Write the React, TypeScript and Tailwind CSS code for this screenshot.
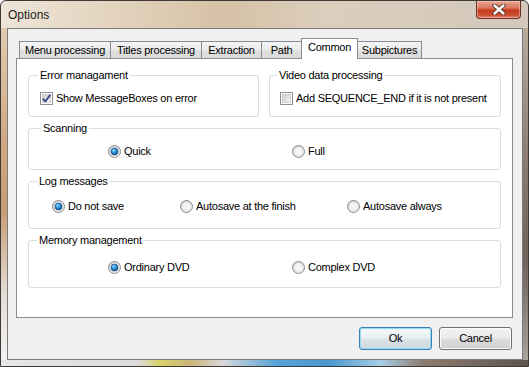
import React from "react";

function Radio({ checked }: { checked?: boolean }) {
  return (
    <svg width="13" height="13" viewBox="0 0 13 13" className="shrink-0">
      <defs>
        <linearGradient id="rOut" x1="0" y1="0" x2="1" y2="1">
          <stop offset="0" stopColor="#cfcfcf" />
          <stop offset="1" stopColor="#fdfdfd" />
        </linearGradient>
        <radialGradient id="rDot" cx="0.4" cy="0.35" r="0.75">
          <stop offset="0" stopColor="#8fe0ff" />
          <stop offset="0.45" stopColor="#2a8fd6" />
          <stop offset="1" stopColor="#0d3f78" />
        </radialGradient>
      </defs>
      <circle cx="6.5" cy="6.5" r="6" fill="url(#rOut)" stroke="#8b8b8b" strokeWidth="1" />
      <circle cx="6.5" cy="6.5" r="4.6" fill="#f4f4f4" stroke="#d0d0d0" strokeWidth="0.6" />
      {checked && <circle cx="6.5" cy="6.5" r="3.5" fill="url(#rDot)" stroke="#1d4f86" strokeWidth="0.7" />}
    </svg>
  );
}

function Check({ checked }: { checked?: boolean }) {
  return (
    <svg width="13" height="13" viewBox="0 0 13 13" className="shrink-0">
      <defs>
        <linearGradient id="cIn" x1="0" y1="0" x2="1" y2="1">
          <stop offset="0" stopColor="#cbcbcb" />
          <stop offset="1" stopColor="#f7f7f7" />
        </linearGradient>
      </defs>
      <rect x="0.5" y="0.5" width="12" height="12" fill="#fdfdfd" stroke="#8e8f8f" />
      <rect x="2.5" y="2.5" width="8" height="8" fill="url(#cIn)" stroke="#b8b8b8" strokeWidth="0.6" />
      {checked && (
        <path d="M2.8 6.6 L5.3 9.3 L10.3 2.8" fill="none" stroke="#3b4f8e" strokeWidth="1.9" strokeLinejoin="round" />
      )}
    </svg>
  );
}

function Group({
  title,
  legendClass,
  className,
  children,
}: {
  title: string;
  legendClass: string;
  className: string;
  children: React.ReactNode;
}) {
  return (
    <div className={`rounded-[3px] border border-[#d5dfe5] ${className}`}>
      <span className={`-mt-[7px] block w-fit bg-white px-[2px] leading-[13px] ${legendClass}`}>{title}</span>
      {children}
    </div>
  );
}

function Item({ checked, label, radio, className }: { checked?: boolean; label: string; radio?: boolean; className?: string }) {
  return (
    <div className={`flex items-center gap-[3px] ${className ?? ""}`}>
      {radio ? <Radio checked={checked} /> : <Check checked={checked} />}
      <span className="leading-[13px] whitespace-nowrap">{label}</span>
    </div>
  );
}

function Tab({ label, w, first }: { label: string; w: string; first?: boolean }) {
  return (
    <div
      className={`flex h-[17px] items-center justify-center border border-b-0 border-[#898c95] bg-[linear-gradient(180deg,#f4f4f4,#ececec_45%,#e0e0e0_55%,#d9d9d9)] leading-[13px] whitespace-nowrap ${w} ${first ? "" : "-ml-px"}`}
    >
      {label}
    </div>
  );
}

export default function App() {
  return (
    <div className="h-[367px] w-[529px] font-['Liberation_Sans',Arial,sans-serif] text-[11px] tracking-[-0.25px] text-black">
      <div className="flex h-[367px] w-[529px] flex-col overflow-hidden rounded-t-[6px] border border-[#3f3a36] bg-[linear-gradient(90deg,#eee4d8_0%,#e3d3bd_22%,#d5c1a5_42%,#dccebd_62%,#d3c8bb_100%)]">
        {/* Title bar */}
        <div className="flex h-[27px] shrink-0 items-start">
          <span className="pl-[7px] pt-[7px] text-[12px] leading-[14px] tracking-normal text-[#1e1e1e]">Options</span>
          <div className="mr-[7px] ml-auto flex h-[18px] w-[45px] items-center justify-center rounded-b-[4px] border border-t-0 border-[#6a2e22] bg-[linear-gradient(180deg,#e9a795,#dc7860_40%,#c5391c_55%,#cf5235_85%,#e28a6e)] shadow-[inset_0_0_0_1px_rgba(255,220,210,0.45)]">
            <svg width="14" height="11" viewBox="0 0 14 11">
              <path d="M2.5 1.5 L11.5 9.5 M11.5 1.5 L2.5 9.5" stroke="#4a2a28" strokeWidth="4.2" strokeLinecap="round" />
              <path d="M2.5 1.5 L11.5 9.5 M11.5 1.5 L2.5 9.5" stroke="#ffffff" strokeWidth="2.4" strokeLinecap="round" />
            </svg>
          </div>
        </div>

        {/* Middle */}
        <div className="flex h-[332px] shrink-0">
          <div className="w-[6px] bg-[linear-gradient(180deg,#e2cbb0,#cfa882_35%,#c89c74_55%,#e4ddd6_80%,#f2f2f2)]" />
          <div className="flex w-[516px] flex-col border border-[#7a7a7a] bg-[#f0f0f0]">
            {/* Tabs */}
            <div className="mt-[9px] ml-[11px] flex h-[20px] items-end">
              <Tab label="Menu processing" w="w-[92px]" first />
              <Tab label="Titles processing" w="w-[92px]" />
              <Tab label="Extraction" w="w-[61px]" />
              <Tab label="Path" w="w-[41px]" />
              <div className="relative z-10 -mb-px -ml-px flex h-[21px] w-[57px] justify-center border border-b-0 border-[#898c95] bg-white pt-[2px] leading-[13px]">
                Common
              </div>
              <Tab label="Subpictures" w="w-[65px]" />
            </div>

            {/* Panel */}
            <div className="ml-[8px] flex h-[260px] w-[497px] flex-col border border-[#898c95] bg-white px-[11px] pt-[16px]">
              <div className="flex gap-[10px]">
                <Group title="Error managament" legendClass="ml-[9px]" className="h-[42px] w-[231px]">
                  <Item className="mt-[10px] ml-[11px]" checked label="Show MessageBoxes on error" />
                </Group>
                <Group title="Video data processing" legendClass="ml-[7px]" className="h-[42px] flex-1">
                  <Item className="mt-[10px] ml-[10px]" label="Add SEQUENCE_END if it is not present" />
                </Group>
              </div>

              <Group title="Scanning" legendClass="ml-[12px]" className="mt-[11px] h-[42px]">
                <div className="mt-[10px] flex pl-[79px]">
                  <Item radio checked label="Quick" className="w-[184px]" />
                  <Item radio label="Full" />
                </div>
              </Group>

              <Group title="Log messages" legendClass="ml-[8px]" className="mt-[11px] h-[48px]">
                <div className="mt-[12px] flex pl-[23px]">
                  <Item radio checked label="Do not save" className="w-[128px]" />
                  <Item radio label="Autosave at the finish" className="w-[167px]" />
                  <Item radio label="Autosave always" />
                </div>
              </Group>

              <Group title="Memory management" legendClass="ml-[8px]" className="mt-[11px] h-[48px]">
                <div className="mt-[14px] flex pl-[79px]">
                  <Item radio checked label="Ordinary DVD" className="w-[184px]" />
                  <Item radio label="Complex DVD" />
                </div>
              </Group>
            </div>

            {/* Buttons */}
            <div className="mt-[9px] flex justify-end gap-[7px] pr-[10px]">
              <button className="flex h-[23px] w-[73px] items-center justify-center rounded-[3px] border border-[#3c7fb1] bg-[linear-gradient(180deg,#f3f7f9,#e9eff2_48%,#dae3e7_52%,#cfd9de)] leading-[13px] shadow-[inset_0_0_0_1px_#8fdcf7]">
                Ok
              </button>
              <button className="flex h-[23px] w-[73px] items-center justify-center rounded-[3px] border border-[#707070] bg-[linear-gradient(180deg,#f2f2f2,#ebebeb_48%,#dddddd_52%,#cfcfcf)] leading-[13px] shadow-[inset_0_0_0_1px_#fbfbfb]">
                Cancel
              </button>
            </div>
          </div>
          <div className="flex-1 bg-[linear-gradient(180deg,#b9aa9c,#8c7b6e_40%,#6f625a_70%,#a8a29d)]" />
        </div>

        {/* Bottom frame */}
        <div className="flex-1 bg-[linear-gradient(90deg,#e6e6e6_0%,#dddddd_26%,#d8d26a_30%,#cbb57c_36%,#d9d9d9_42%,#5aa5d8_52%,#4a98d0_62%,#a7cde6_72%,#8d7e72_80%,#5e524a_100%)]" />
      </div>
    </div>
  );
}
